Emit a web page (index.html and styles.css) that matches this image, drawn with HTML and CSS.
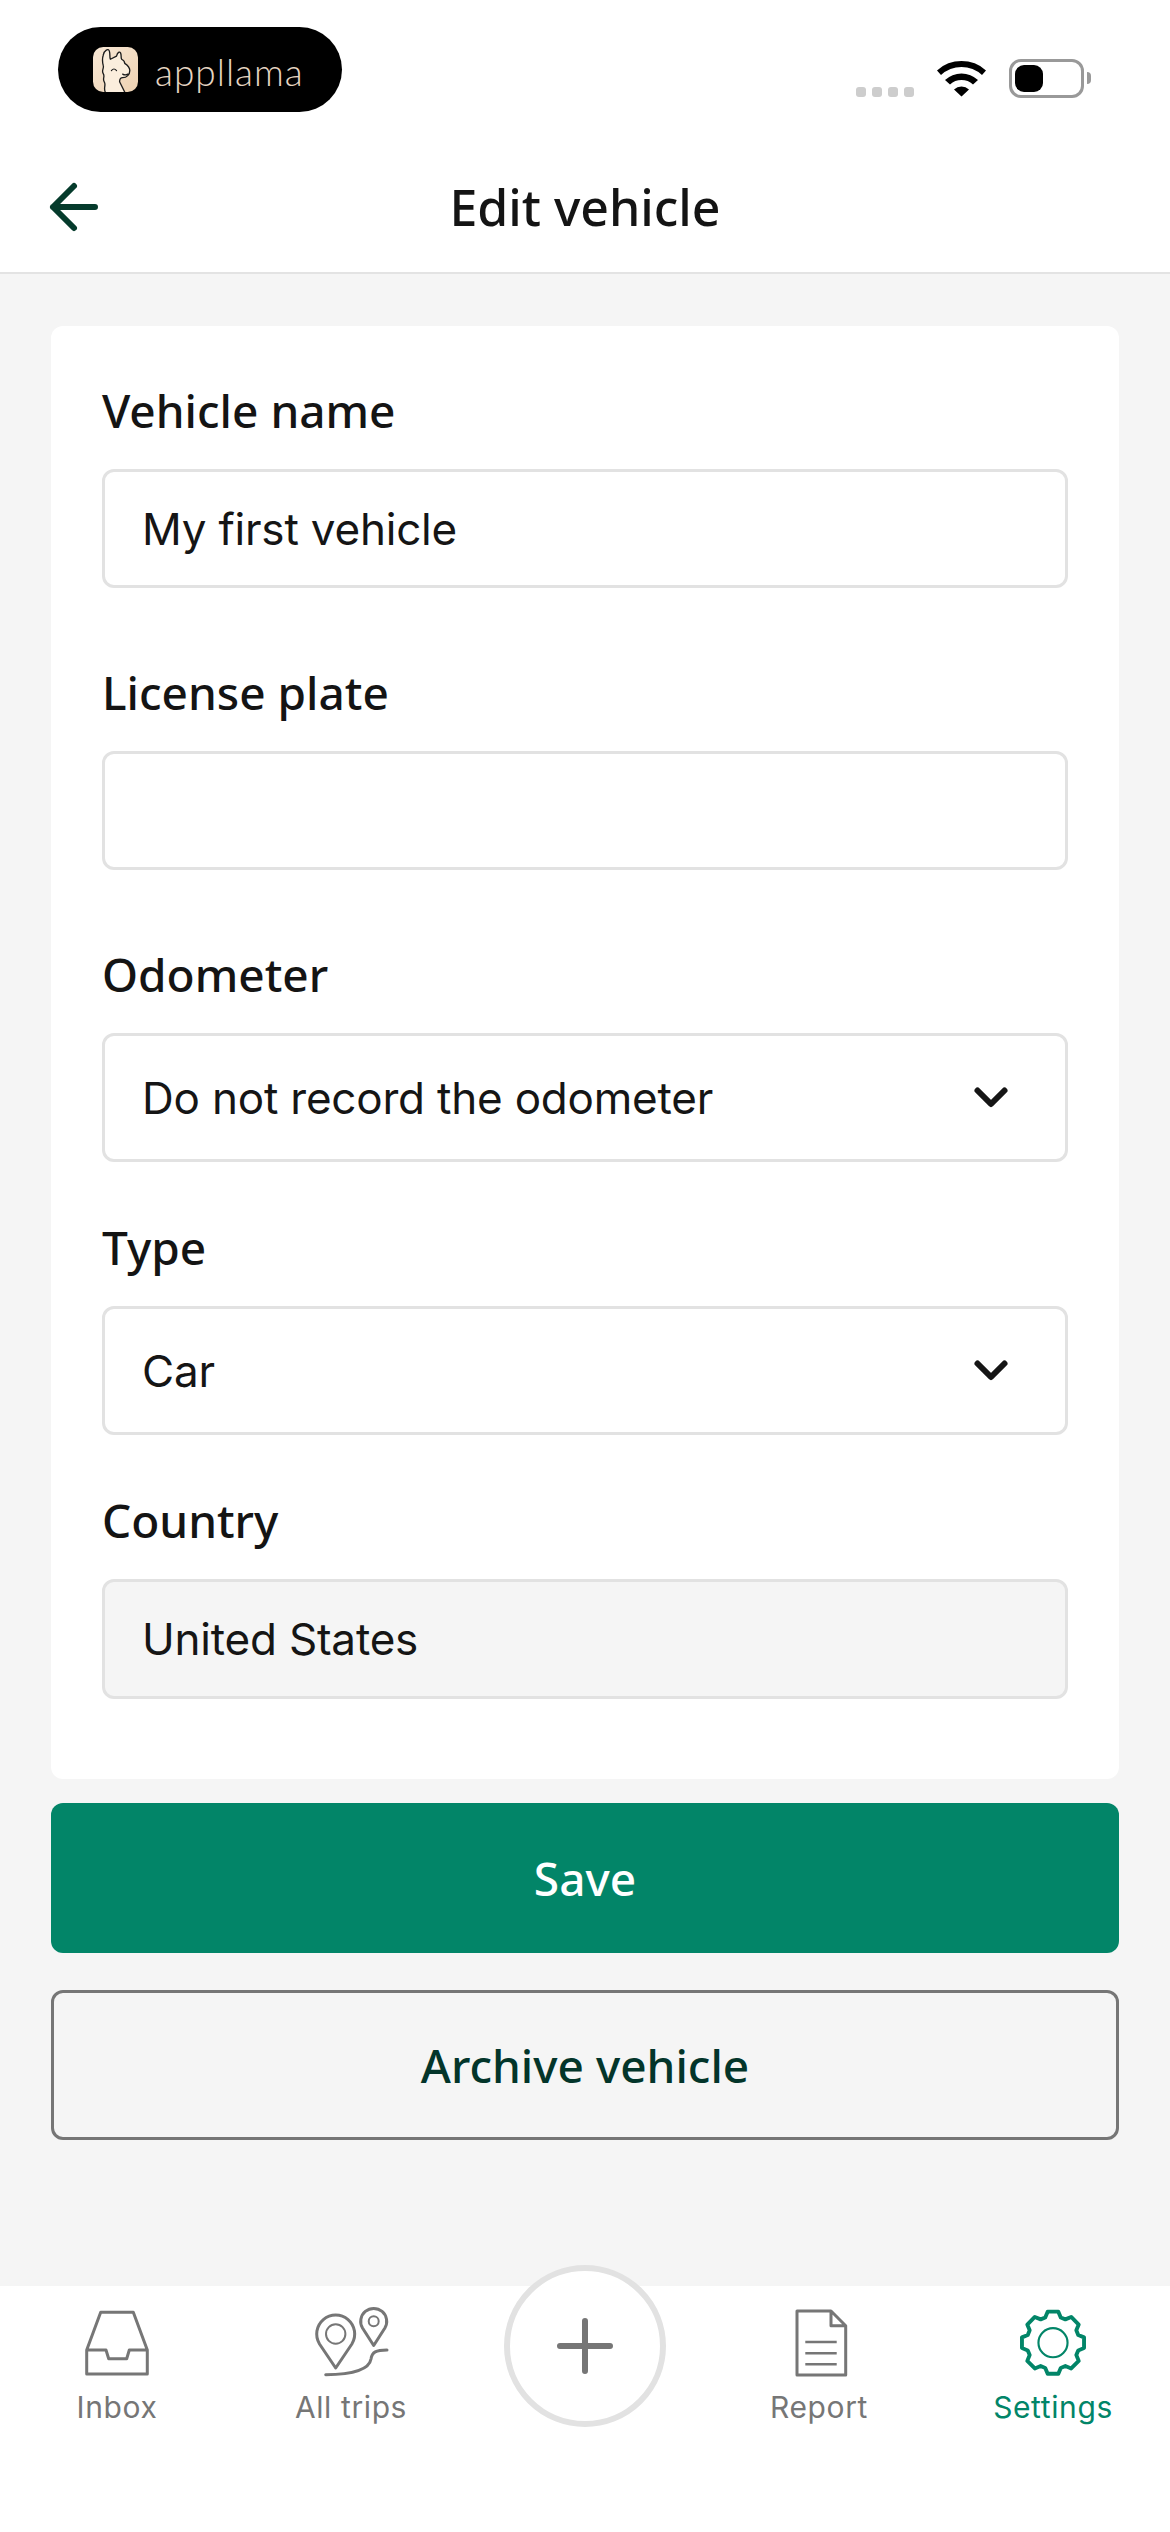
FILE: index.html
```html
<!DOCTYPE html>
<html lang="en">
<head>
<meta charset="utf-8">
<title>Edit vehicle</title>
<link rel="stylesheet" href="styles.css">
</head>
<body>
<div class="app">
  <header class="status">
    <div class="pill">
      <svg class="llama" viewBox="0 0 44 44">
        <defs><linearGradient id="peach" x1="0" y1="0" x2="1" y2="1"><stop offset="0" stop-color="#f8e8d6"/><stop offset="1" stop-color="#eed2b2"/></linearGradient></defs>
        <rect width="44" height="44" rx="10" fill="url(#peach)"/>
        <path d="M12 44 C10 40 13 37 11 34 C9 31 12 29 10 26 C8 23 11 21 10 18 C9 14 9 11 10 8 C11 3 15 1 16 4 C17 7 16 10 17 12 C19 11 21 10 23 9 C24 5 26 4 27 6 C28 8 27 10 28 12 C30 13 31 14 31 16 C34 18 36 20 36 23 C36 27 33 30 29 30 C27 30 26 32 26 34 L31 44" fill="#fbeedd" stroke="#1c1c1c" stroke-width="1.3" stroke-linejoin="round" stroke-linecap="round"/>
        <path d="M18 23 q2.5 -3 5 0 M34 26.5 q-2.500 1.500 -5 0" fill="none" stroke="#1c1c1c" stroke-width="1.2" stroke-linecap="round"/>
      </svg>
      <span class="brand">appllama</span>
    </div>
    <div class="indicators">
      <div class="signal"><i class="dot"></i><i class="dot"></i><i class="dot"></i><i class="dot"></i></div>
      <svg class="wifi" viewBox="0 0 52 42">
        <path d="M1 14.5 A36 36 0 0 1 50 14.5 L46 19 A30 30 0 0 0 5 19 Z M9 24 A24 24 0 0 1 42 24 L37 28.5 A17 17 0 0 0 14 28.5 Z M18 33.5 A11 11 0 0 1 33 33.5 L25.5 40.5 Z" fill="#000"/>
      </svg>
      <div class="battery"><div class="charge"></div></div>
      <div class="nub"></div>
    </div>
  </header>

  <nav class="titlebar">
    <svg class="back" viewBox="0 0 54 54">
      <path d="M6 27 H48 M27 6 L6 27 L27 48" fill="none" stroke="#053b2c" stroke-width="6" stroke-linecap="round" stroke-linejoin="round"/>
    </svg>
    <h1 class="title">Edit vehicle</h1>
  </nav>

  <main class="content">
    <section class="card">
      <div class="label">Vehicle name</div>
      <div class="field text-field">My first vehicle</div>
      <div class="label">License plate</div>
      <div class="field text-field"></div>
      <div class="label">Odometer</div>
      <div class="field select-field"><span>Do not record the odometer</span>
        <svg class="chevron" viewBox="0 0 40 26"><path d="M6.500 5.500 L20 19 L33.500 5.500" fill="none" stroke="#151515" stroke-width="6" stroke-linecap="round" stroke-linejoin="round"/></svg>
      </div>
      <div class="label">Type</div>
      <div class="field select-field"><span>Car</span>
        <svg class="chevron" viewBox="0 0 40 26"><path d="M6.500 5.500 L20 19 L33.500 5.500" fill="none" stroke="#151515" stroke-width="6" stroke-linecap="round" stroke-linejoin="round"/></svg>
      </div>
      <div class="label">Country</div>
      <div class="field disabled-field">United States</div>
    </section>
    <button class="btn btn-save">Save</button>
    <button class="btn btn-archive">Archive vehicle</button>
  </main>

  <footer class="tabbar">
    <div class="tab">
      <svg class="tab-icon" viewBox="0 0 78 78"><path d="M22.7 9.3 H55.3 L69.3 47 V71 H8.7 V47 Z M8.7 47 H28 L30.7 55.7 H48.7 L51.3 47 H69.3" fill="none" stroke="#767676" stroke-width="3" stroke-linejoin="round"/></svg>
      <span class="tab-label">Inbox</span>
    </div>
    <div class="tab">
      <svg class="tab-icon" viewBox="0 0 78 78">
        <path d="M23.7 65 L7.5 41 A19 19 0 1 1 39.9 41 Z M61.7 42.5 L50.5 25 A13 13 0 1 1 72.9 25 Z M13.7 71.7 C36 71.500 57 68 59 56 C60 49 64 47 75 47" fill="none" stroke="#767676" stroke-width="3" stroke-linejoin="round" stroke-linecap="round"/>
        <circle cx="23.7" cy="31" r="9.7" fill="none" stroke="#767676" stroke-width="2"/>
        <circle cx="61.7" cy="18.3" r="5" fill="none" stroke="#767676" stroke-width="2"/>
      </svg>
      <span class="tab-label">All trips</span>
    </div>
    <div class="tab">
      <div class="add">
        <svg class="add-icon" viewBox="0 0 62 62"><path d="M31 6 V56 M6 31 H56" fill="none" stroke="#767676" stroke-width="6" stroke-linecap="round"/></svg>
      </div>
    </div>
    <div class="tab">
      <svg class="tab-icon" viewBox="0 0 78 78">
        <path d="M17 8 H51 L65.7 22.7 V72 H17 Z M51 8 V22.7 H65.7" fill="none" stroke="#767676" stroke-width="3" stroke-linejoin="round"/>
        <path d="M25.3 39 H56.7 M25.3 50.3 H56.7 M25.3 61.3 H56.7" fill="none" stroke="#767676" stroke-width="2.4"/>
      </svg>
      <span class="tab-label">Report</span>
    </div>
    <div class="tab tab-active">
      <svg class="tab-icon" viewBox="0 0 78 78">
        <g transform="translate(39 39.7) scale(.97)" fill="none" stroke="#028568">
          <path stroke-width="4" stroke-linejoin="round" d="M-8 -26 L-5.5 -32 L5.5 -32 L8 -26 L12.73 -24.04 L18.74 -26.52 L26.52 -18.74 L24.04 -12.73 L26 -8 L32 -5.5 L32 5.5 L26 8 L24.04 12.73 L26.52 18.74 L18.74 26.52 L12.73 24.04 L8 26 L5.5 32 L-5.5 32 L-8 26 L-12.73 24.04 L-18.74 26.52 L-26.52 18.74 L-24.04 12.73 L-26 8 L-32 5.5 L-32 -5.5 L-26 -8 L-24.04 -12.73 L-26.52 -18.74 L-18.74 -26.52 L-12.73 -24.04 Z"/>
          <circle r="15" stroke-width="2.2"/>
        </g>
      </svg>
      <span class="tab-label">Settings</span>
    </div>
  </footer>
</div>
</body>
</html>
```

FILE: styles.css
```css
* { box-sizing: border-box; }
html, body { margin: 0; padding: 0; background: #fff; }
.app {
  width: 1170px;
  height: 2532px;
  display: flex;
  flex-direction: column;
  overflow: hidden;
  font-family: "Inter", "Liberation Sans", sans-serif;
}

/* status bar */
.status {
  height: 138px;
  flex: none;
  display: flex;
  justify-content: space-between;
  align-items: flex-start;
  padding: 27px 79px 0 58px;
}
.pill {
  width: 284px;
  height: 85px;
  border-radius: 43px;
  background: #000;
  display: flex;
  align-items: center;
  padding-left: 35px;
  gap: 17px;
}
.llama { width: 45px; height: 45px; flex: none; }
.brand {
  font-family: "Lato", sans-serif;
  font-weight: 300;
  font-size: 37px;
  line-height: 45px;
  letter-spacing: 1px;
  color: #e6d5c2;
  padding-top: 3px;
}
.indicators {
  display: flex;
  align-items: flex-end;
  height: 70px;
}
.signal { display: flex; gap: 6px; margin-right: 22px; }
.dot { display: block; width: 10px; height: 10px; border-radius: 3px; background: #cdcdcd; }
.wifi { width: 52px; height: 42px; margin-right: 21px; margin-bottom: -1px; }
.battery {
  width: 75px;
  height: 39px;
  border: 3px solid #999;
  border-radius: 12px;
  padding: 3px;
  background: #fff;
  margin-bottom: -1px;
}
.charge { width: 28px; height: 27px; background: #000; border-radius: 9px; }
.nub {
  width: 4px;
  height: 12px;
  margin: 0 0 13px 3px;
  background: #999;
  border-radius: 0 6px 6px 0;
}

/* title */
.titlebar {
  height: 136px;
  flex: none;
  border-bottom: 2px solid #e3e3e3;
  display: flex;
  align-items: center;
  justify-content: center;
  position: relative;
}
.back { position: absolute; left: 47px; top: 42px; width: 54px; height: 54px; }
.title {
  margin: 0;
  padding-top: 4px;
  font-family: "Noto Sans", sans-serif;
  font-weight: 500;
  font-size: 50px;
  line-height: 70px;
  color: #141414;
}

/* form */
.content {
  flex: 1;
  background: #f5f5f5;
  padding: 52px 51px 0;
  display: flex;
  flex-direction: column;
}
.card {
  background: #fff;
  border-radius: 12px;
  padding: 51px 51px 80px;
  height: 1453px;
}
.label {
  font-family: "Noto Sans", sans-serif;
  font-weight: 500;
  font-size: 46px;
  line-height: 66px;
  padding-bottom: 4px;
  color: #141414;
  margin-bottom: 22px;
}
.field {
  border: 3px solid #e2e2e2;
  border-radius: 12px;
  padding: 0 37px;
  font-size: 44px;
  letter-spacing: -0.2px;
  color: #151515;
  display: flex;
  align-items: center;
  justify-content: space-between;
}
.text-field { height: 119px; margin-bottom: 71px; }
.select-field { height: 129px; margin-bottom: 52px; padding-right: 54px; }
.disabled-field { height: 120px; background: #f5f5f5; }
.chevron { width: 40px; height: 26px; flex: none; }

.btn {
  display: block;
  width: 100%;
  height: 150px;
  border-radius: 12px;
  font-family: "Noto Sans", sans-serif;
  font-weight: 500;
  font-size: 46px;
  padding: 0;
}
.btn-save { margin-top: 24px; background: #028568; border: 0; color: #fff; }
.btn-archive { margin-top: 37px; background: transparent; border: 3px solid #767676; color: #03352a; }

/* tabs */
.tabbar {
  height: 246px;
  flex: none;
  background: #fff;
  display: grid;
  grid-template-columns: repeat(5, 234px);
  padding-top: 17px;
}
.tab {
  display: flex;
  flex-direction: column;
  align-items: center;
  color: #767676;
}
.tab-active { color: #028568; }
.tab-icon { width: 78px; height: 78px; flex: none; }
.tab-label { font-size: 30px; line-height: 36px; margin-top: 8px; letter-spacing: 0.6px; white-space: nowrap; }
.add {
  width: 162px;
  height: 162px;
  margin-top: -38px;
  border: 6px solid #e2e2e2;
  border-radius: 50%;
  background: #fff;
  display: flex;
  align-items: center;
  justify-content: center;
}
.add-icon { width: 62px; height: 62px; }
```
